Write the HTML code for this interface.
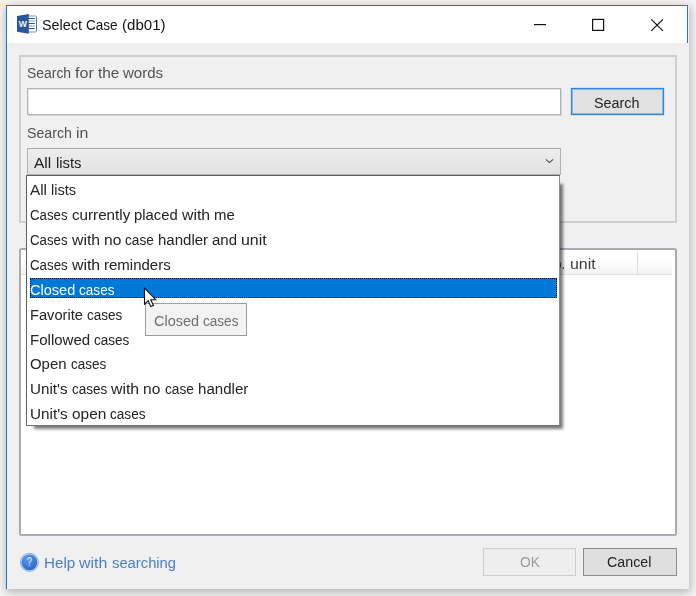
<!DOCTYPE html>
<html><head><meta charset="utf-8"><title>Select Case (db01)</title>
<style>
html,body{margin:0;padding:0;}
body{width:696px;height:596px;overflow:hidden;position:relative;background:#f4f4f4;font-family:"Liberation Sans",sans-serif;font-size:15px;color:#000;}
.abs{position:absolute;}
.t{position:absolute;white-space:nowrap;font-kerning:none;font-size:15.4px;line-height:20px;height:20px;transform-origin:0 50%;}
#shadow{left:7px;top:6px;width:682px;height:583px;box-shadow:0 2px 9px 1px rgba(0,0,0,.28);background:#f0f0f0;}
#body{left:7px;top:43px;width:682px;height:546px;background:#f0f0f0;}
#title{left:6px;top:5px;width:680px;height:37px;background:#fff;border:1px solid #187ad6;border-bottom:none;}
#lborder{left:6px;top:5px;width:1px;height:584px;background:#187ad6;}
.grp{border:2px solid #cecece;box-sizing:border-box;}
.inp{background:#fff;border:1px solid #b1b4bb;box-sizing:border-box;box-shadow:inset 1px 1px 0 rgba(177,180,187,.35), 1px 1px 0 rgba(177,180,187,.5);}
.btn{box-sizing:border-box;background:#dfdfdf;border:1px solid #8c8c8c;}
#list{left:19px;top:248px;width:658px;height:288px;background:#fff;border:2px solid #a8abb1;border-radius:2.5px;box-sizing:border-box;}
#hdr{left:0px;top:0px;width:651px;height:24px;background:linear-gradient(#fff 40%,#f3f3f3);border-bottom:1px solid #e2e2e2;}
#dd{left:26px;top:175px;width:534px;height:251px;background:#fff;border:1px solid #606060;border-right-color:#8a8a8a;border-bottom-color:#707070;box-sizing:border-box;}
#dds{left:34px;top:184px;width:528.5px;height:244.5px;background:rgba(0,0,0,.52);filter:blur(1.5px);}
#sel{left:30px;top:278px;width:527px;height:20px;background:#0078d7;box-sizing:border-box;border:1px dotted #0a1420;}
.li{left:30px;color:#1c1c1c;}
#tip{left:145px;top:303px;width:102px;height:33px;box-sizing:border-box;background:#f3f3f3;border:1px solid #9c9c9c;}
</style></head><body>
<div id="shadow" class="abs"></div>
<div id="body" class="abs"></div>
<div id="title" class="abs"></div>
<div id="lborder" class="abs"></div>

<!-- word icon -->
<svg class="abs" style="left:17px;top:14px" width="20" height="20" viewBox="0 0 20 20">
<rect x="9.5" y="2" width="10" height="16" rx="0.8" fill="#fff" stroke="#7a95c5" stroke-width="1"/>
<line x1="19.5" y1="3" x2="19.5" y2="17" stroke="#4f74b2" stroke-width="1"/>
<g stroke-width="1"><line x1="11" y1="4.5" x2="17.8" y2="4.5" stroke="#2b579a"/><line x1="11" y1="7" x2="17.8" y2="7" stroke="#7d99ca"/><line x1="11" y1="9.5" x2="17.8" y2="9.5" stroke="#2b579a"/><line x1="11" y1="12" x2="17.8" y2="12" stroke="#7d99ca"/><line x1="11" y1="14.5" x2="17.8" y2="14.5" stroke="#2b579a"/></g>
<path d="M0 2 L11.8 0.1 V19.8 L0 17.8 Z" fill="#2b579a"/>
<text x="5.9" y="12.8" font-family="Liberation Sans, sans-serif" font-weight="bold" font-size="9.6" fill="#f2f5fa" text-anchor="middle" textLength="8.2" lengthAdjust="spacingAndGlyphs">W</text>
</svg>
<div class="ln"><span class="t" id="ttl" style="left:41.75px;top:14.88px;transform:scaleX(0.9345);color:#141414">Select</span> <span class="t" style="left:85.93px;top:14.88px;transform:scaleX(0.8813);color:#141414">Case</span> <span class="t" style="left:121.79px;top:14.88px;transform:scaleX(0.9804);color:#141414">(db01)</span></div>

<!-- caption buttons -->
<svg class="abs" style="left:520px;top:6px" width="168" height="37" viewBox="0 0 168 37">
<g stroke="#111" stroke-width="1.2" fill="none">
<line x1="14" y1="18.6" x2="26" y2="18.6"/>
<rect x="72.6" y="13.4" width="11" height="11"/>
<path d="M131.3 13.3 L142.9 24.9 M142.9 13.3 L131.3 24.9"/>
</g></svg>

<!-- group 1 -->
<div class="abs grp" style="left:19px;top:55px;width:658px;height:168px"></div>
<div class="ln"><span class="t" id="l1" style="left:26.66px;top:62.88px;transform:scaleX(0.9047);color:#525252">Search</span> <span class="t" style="left:74.92px;top:62.88px;transform:scaleX(1.0428);color:#525252">for</span> <span class="t" style="left:97.77px;top:62.88px;transform:scaleX(1.0015);color:#525252">the</span> <span class="t" style="left:123.33px;top:62.88px;transform:scaleX(0.9769);color:#525252">words</span></div>
<div class="abs inp" style="left:27px;top:88px;width:534px;height:27px"></div>
<div class="abs" style="left:571px;top:88px;width:93px;height:27px;box-sizing:border-box;background:#e1e1e1;border:1px solid #2b88dd;box-shadow:inset 0 0 0 1px rgba(0,120,215,.38), 0 0 0 .5px rgba(0,120,215,.25);"></div>
<div class="ln"><span class="t" id="bs" style="left:594.44px;top:92.88px;transform:scaleX(0.9331);color:#242424">Search</span></div>
<div class="ln"><span class="t" id="l2" style="left:26.65px;top:122.88px;transform:scaleX(0.9218);color:#525252">Search</span> <span class="t" style="left:75.82px;top:122.88px;transform:scaleX(1.0311);color:#525252">in</span></div>
<div class="abs" style="left:27px;top:148px;width:534px;height:27px;box-sizing:border-box;border:1px solid #b0b0b0;border-top-color:#a9a9a9;background:linear-gradient(#ededed,#e2e2e2)"></div>
<div class="ln"><span class="t" id="cb" style="left:34.07px;top:152.88px;transform:scaleX(1.0083);color:#202020">All</span> <span class="t" style="left:55.51px;top:152.88px;transform:scaleX(0.9632);color:#202020">lists</span></div>
<svg class="abs" style="left:543px;top:156px" width="12" height="10" viewBox="0 0 12 10"><path d="M2.9 3.4 L6.5 6.6 L10.1 3.4" stroke="#4a4a4a" stroke-width="1.15" fill="none"/></svg>

<!-- list box -->
<div id="list" class="abs"><div id="hdr" class="abs"></div>
<div class="abs" style="left:616px;top:2px;width:1px;height:23px;background:#dcdcdc"></div>
</div>
<div class="ln"><span class="t" id="hu" style="left:530.20px;top:253.88px;transform:scaleX(0.8763);color:#3c3c3c">Resp.</span> <span class="t" style="left:569.56px;top:253.88px;transform:scaleX(1.0336);color:#3c3c3c">unit</span></div>

<!-- dropdown -->
<div id="dds" class="abs"></div>
<div id="dd" class="abs"></div>
<div id="sel" class="abs"></div>
<div class="ln"><span class="t" id="i0" style="left:29.90px;top:179.88px;transform:scaleX(0.9933);color:#242424">All</span> <span class="t" style="left:51.02px;top:179.88px;transform:scaleX(0.9489);color:#242424">lists</span></div>
<div class="ln"><span class="t" id="i1" style="left:29.90px;top:204.88px;transform:scaleX(0.8612);color:#242424">Cases</span> <span class="t" style="left:71.61px;top:204.88px;transform:scaleX(0.9872);color:#242424">currently</span> <span class="t" style="left:134.02px;top:204.88px;transform:scaleX(0.9653);color:#242424">placed</span> <span class="t" style="left:181.95px;top:204.88px;transform:scaleX(1.0265);color:#242424">with</span> <span class="t" style="left:214.18px;top:204.88px;transform:scaleX(0.9725);color:#242424">me</span></div>
<div class="ln"><span class="t" id="i2" style="left:29.90px;top:229.88px;transform:scaleX(0.8595);color:#242424">Cases</span> <span class="t" style="left:71.53px;top:229.88px;transform:scaleX(1.0244);color:#242424">with</span> <span class="t" style="left:103.70px;top:229.88px;transform:scaleX(1.0085);color:#242424">no</span> <span class="t" style="left:125.08px;top:229.88px;transform:scaleX(0.8850);color:#242424">case</span> <span class="t" style="left:157.98px;top:229.88px;transform:scaleX(0.9761);color:#242424">handler</span> <span class="t" style="left:212.24px;top:229.88px;transform:scaleX(0.9712);color:#242424">and</span> <span class="t" style="left:241.31px;top:229.88px;transform:scaleX(1.0343);color:#242424">unit</span></div>
<div class="ln"><span class="t" id="i3" style="left:29.90px;top:254.88px;transform:scaleX(0.8640);color:#242424">Cases</span> <span class="t" style="left:71.75px;top:254.88px;transform:scaleX(1.0298);color:#242424">with</span> <span class="t" style="left:104.08px;top:254.88px;transform:scaleX(0.9747);color:#242424">reminders</span></div>
<div class="ln"><span class="t" id="i4" style="left:29.90px;top:279.88px;transform:scaleX(0.9437);color:#fff">Closed</span> <span class="t" style="left:79.29px;top:279.88px;transform:scaleX(0.8829);color:#fff">cases</span></div>
<div class="ln"><span class="t" id="i5" style="left:29.90px;top:304.88px;transform:scaleX(0.9505);color:#242424">Favorite</span> <span class="t" style="left:86.90px;top:304.88px;transform:scaleX(0.8761);color:#242424">cases</span></div>
<div class="ln"><span class="t" id="i6" style="left:29.90px;top:329.88px;transform:scaleX(0.9765);color:#242424">Followed</span> <span class="t" style="left:94.22px;top:329.88px;transform:scaleX(0.8805);color:#242424">cases</span></div>
<div class="ln"><span class="t" id="i7" style="left:29.90px;top:353.88px;transform:scaleX(0.9707);color:#242424">Open</span> <span class="t" style="left:70.59px;top:353.88px;transform:scaleX(0.8763);color:#242424">cases</span></div>
<div class="ln"><span class="t" id="i8" style="left:29.90px;top:378.88px;transform:scaleX(0.9866);color:#242424">Unit's</span> <span class="t" style="left:71.54px;top:378.88px;transform:scaleX(0.8772);color:#242424">cases</span> <span class="t" style="left:110.96px;top:378.88px;transform:scaleX(1.0282);color:#242424">with</span> <span class="t" style="left:143.24px;top:378.88px;transform:scaleX(1.0122);color:#242424">no</span> <span class="t" style="left:164.71px;top:378.88px;transform:scaleX(0.8883);color:#242424">case</span> <span class="t" style="left:197.73px;top:378.88px;transform:scaleX(0.9797);color:#242424">handler</span></div>
<div class="ln"><span class="t" id="i9" style="left:29.90px;top:403.88px;transform:scaleX(0.9928);color:#242424">Unit's</span> <span class="t" style="left:71.81px;top:403.88px;transform:scaleX(1.0009);color:#242424">open</span> <span class="t" style="left:110.25px;top:403.88px;transform:scaleX(0.8827);color:#242424">cases</span></div>

<!-- tooltip -->
<div id="tip" class="abs"></div>
<div class="ln"><span class="t" id="tp" style="left:153.84px;top:310.88px;transform:scaleX(0.9426);color:#707070">Closed</span> <span class="t" style="left:203.18px;top:310.88px;transform:scaleX(0.8819);color:#707070">cases</span></div>

<!-- cursor -->
<svg class="abs" style="left:143px;top:287px" width="14" height="21" viewBox="0 0 14 21"><path d="M1.5 1.2 V17.2 L5.2 13.7 L7.8 19.6 L10.4 18.4 L7.8 12.7 H12.8 Z" fill="#fff" stroke="#111" stroke-width="1.1" stroke-linejoin="miter"/></svg>

<!-- bottom -->
<svg class="abs" style="left:19px;top:552px" width="21" height="21" viewBox="0 0 21 21">
<defs><radialGradient id="hg" cx="0.4" cy="0.3" r="0.8"><stop offset="0" stop-color="#5f9ce6"/><stop offset="1" stop-color="#1f64c6"/></radialGradient></defs>
<circle cx="10.4" cy="10.3" r="9" fill="#cfe0f6" stroke="#74a5e3" stroke-width="0.9"/>
<circle cx="10.4" cy="10.3" r="7.9" fill="url(#hg)"/>
<text x="10.45" y="14.3" font-family="Liberation Sans, sans-serif" font-size="12" fill="#e3edfa" text-anchor="middle" textLength="5.2" lengthAdjust="spacingAndGlyphs">?</text>
</svg>
<div class="ln"><span class="t" id="hl" style="left:43.78px;top:552.88px;transform:scaleX(0.9877);color:#4c80c6">Help</span> <span class="t" style="left:79.21px;top:552.88px;transform:scaleX(1.0350);color:#4c80c6">with</span> <span class="t" style="left:111.71px;top:552.88px;transform:scaleX(0.9599);color:#4c80c6">searching</span></div>
<div class="abs" style="left:483px;top:548px;width:93px;height:28px;box-sizing:border-box;background:#eeeeee;border:1px solid #cdcdcd"></div>
<div class="ln"><span class="t" id="ok" style="left:519.51px;top:551.88px;transform:scaleX(0.8959);color:#9b9b9b">OK</span></div>
<div class="abs btn" style="left:583px;top:548px;width:94px;height:28px"></div>
<div class="ln"><span class="t" id="cc" style="left:607.44px;top:551.88px;transform:scaleX(0.9272);color:#242424">Cancel</span></div>
</body></html>
